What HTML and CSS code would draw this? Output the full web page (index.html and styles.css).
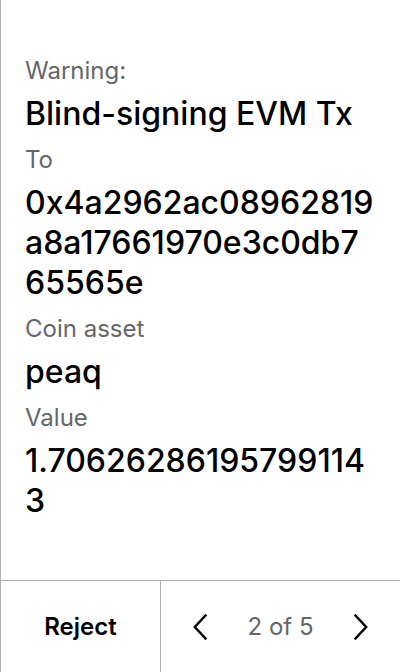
FILE: index.html
```html
<!DOCTYPE html>
<html>
<head>
<meta charset="utf-8">
<link rel="stylesheet" href="styles.css">
</head>
<body>
<div class="screen">
  <main class="content">
    <div class="field">
      <div class="label">Warning:</div>
      <div class="value">Blind-signing EVM Tx</div>
    </div>
    <div class="field">
      <div class="label">To</div>
      <div class="value">0x4a2962ac08962819a8a17661970e3c0db765565e</div>
    </div>
    <div class="field">
      <div class="label">Coin asset</div>
      <div class="value">peaq</div>
    </div>
    <div class="field">
      <div class="label">Value</div>
      <div class="value">1.706262861957991143</div>
    </div>
  </main>
  <footer class="footer">
    <div class="reject">Reject</div>
    <div class="nav">
      <svg class="chev" width="14" height="26" viewBox="0 0 14 26"><path d="M12.5 1.5 L1.8 13 L12.5 24.5" fill="none" stroke="#000" stroke-width="2.4" stroke-linecap="square" stroke-linejoin="miter"/></svg>
      <span class="page">2 of 5</span>
      <svg class="chev" width="14" height="26" viewBox="0 0 14 26"><path d="M1.5 1.5 L12.2 13 L1.5 24.5" fill="none" stroke="#000" stroke-width="2.4" stroke-linecap="square" stroke-linejoin="miter"/></svg>
    </div>
  </footer>
</div>
</body>
</html>
```
FILE: styles.css
```css
html, body {
  margin: 0;
  padding: 0;
  background: #fff;
}
.screen {
  width: 399px;
  height: 672px;
  border-left: 1px solid #b0b0b0;
  display: flex;
  flex-direction: column;
  font-family: Inter, "Noto Sans", sans-serif;
  color: #000;
}
.content {
  flex: 1;
  padding: 55px 24px 0 24px;
}
.field {
  margin-bottom: 10px;
}
.label {
  font-size: 24px;
  line-height: 32px;
  color: #666;
  margin-bottom: 7px;
}
.value {
  font-size: 32px;
  line-height: 40px;
  font-weight: 500;
  word-break: break-all;
}
.footer {
  height: 91px;
  border-top: 1px solid #b0b0b0;
  display: flex;
}
.reject {
  width: 159px;
  border-right: 1px solid #b0b0b0;
  display: flex;
  align-items: center;
  justify-content: center;
  font-size: 24px;
  font-weight: 600;
}
.nav {
  flex: 1;
  display: flex;
  align-items: center;
  justify-content: space-between;
  padding: 0 32px;
}
.chev {
  display: block;
}
.page {
  font-size: 24px;
  color: #666;
}
```
